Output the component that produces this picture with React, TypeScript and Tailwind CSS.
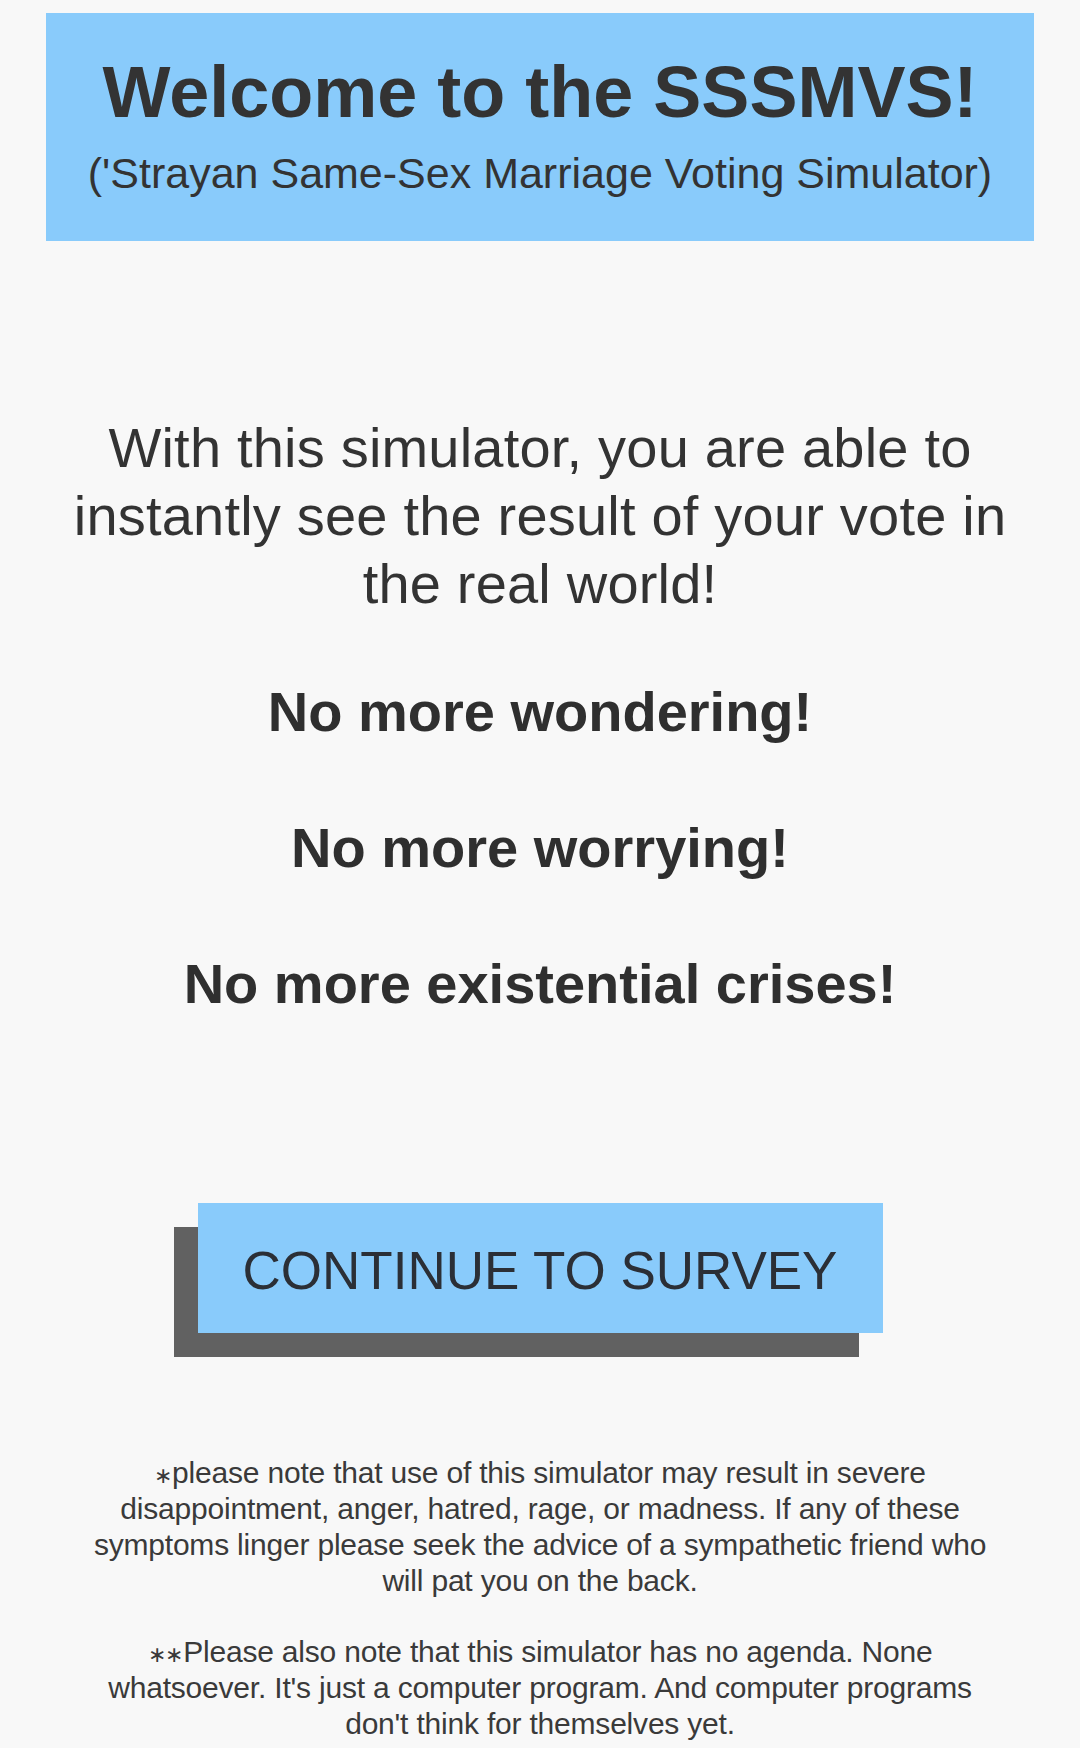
import React from 'react';

const sans = "font-['Liberation_Sans',Arial,sans-serif]";

const Header: React.FC = () => (
  <header className="mx-[46px] mt-[13px] h-[228px] bg-[#89cbfb] pt-[39px] text-center text-[#333333]">
    <h1 className="text-[72px] leading-[80px] font-bold">Welcome to the SSSMVS!</h1>
    <p className="mt-[16px] text-[43px] leading-[50px]">('Strayan Same-Sex Marriage Voting Simulator)</p>
  </header>
);

const Pitch: React.FC = () => (
  <section className="mt-[173px] px-[60px] text-center text-[#333333]">
    <p className="text-[56px] leading-[68px] tracking-[0.2px]">
      With this simulator, you are able to instantly see the result of your vote in the real world!
    </p>
    <div className="mt-[60px] flex flex-col gap-[68px] text-[56px] leading-[68px] font-bold text-[#2f2f2f]">
      <p>No more wondering!</p>
      <p>No more worrying!</p>
      <p>No more existential crises!</p>
    </div>
  </section>
);

// small footnote marker
const Star: React.FC<{ n?: number }> = ({ n = 1 }) => (
  <span className="text-[22px] leading-none">{'∗'.repeat(n)}</span>
);

export default function App() {
  return (
    <div className={`${sans} min-h-[1748px] w-full overflow-hidden bg-[#f8f8f8] pb-[6px]`}>
      <Header />
      <Pitch />

      {/* Main call to action with the offset block shadow */}
      <div className="mt-[185px] flex justify-center">
        <button className="h-[130px] w-[685px] bg-[#89cbfb] pt-[5px] text-center text-[53px] leading-[125px] text-[#2b2f36] shadow-[-24px_24px_0_#616161]">
          CONTINUE TO SURVEY
        </button>
      </div>

      {/* Fine print */}
      <footer className="mt-[122px] px-[70px] text-center text-[30px] leading-[36px] tracking-[-0.2px] text-[#3a3a3a]">
        <p>
          <Star />please note that use of this simulator may result in severe
          <br />
          disappointment, anger, hatred, rage, or madness. If any of these
          <br />
          symptoms linger please seek the advice of a sympathetic friend who
          <br />
          will pat you on the back.
        </p>
        <p className="mt-[35px]">
          <Star n={2} />Please also note that this simulator has no agenda. None
          <br />
          whatsoever. It's just a computer program. And computer programs
          <br />
          don't think for themselves yet.
        </p>
      </footer>
    </div>
  );
}
